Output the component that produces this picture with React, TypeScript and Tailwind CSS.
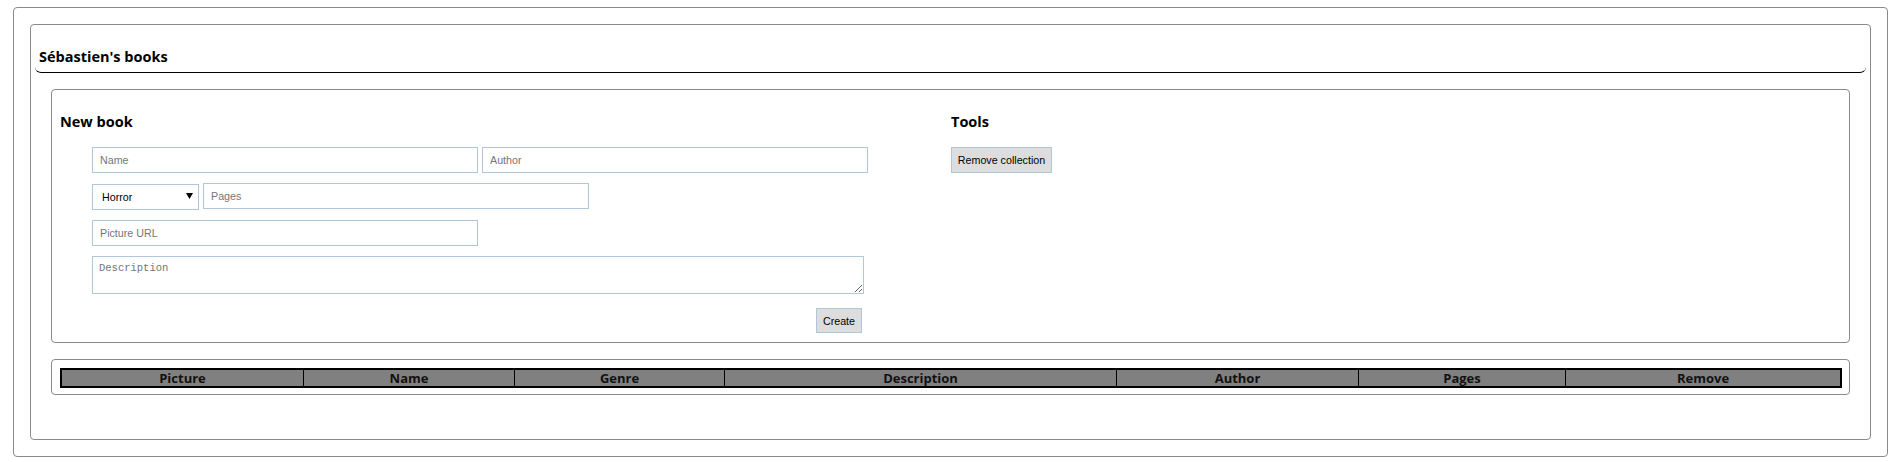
const columns = [
  { label: "Picture", w: "w-[241px]" },
  { label: "Name", w: "w-[211px]" },
  { label: "Genre", w: "w-[210px]" },
  { label: "Description", w: "w-[392px]" },
  { label: "Author", w: "w-[242px]" },
  { label: "Pages", w: "w-[207px]" },
  { label: "Remove", w: "" },
];

const field =
  "h-[26px] border border-[#b0c7d8] bg-white px-[7px] text-[10.7px] text-black placeholder:text-[#757575] font-['Liberation_Sans',Arial,sans-serif] outline-none";

const button =
  "border border-[#b0c7d8] bg-[#dddddd] text-[10.7px] text-black font-['Liberation_Sans',Arial,sans-serif] cursor-pointer";

function NewBook() {
  return (
    <div className="w-[899px] shrink-0 pl-2 pt-[21px] pb-[9px]">
      <h3 className="text-[14.5px] leading-[22px] font-bold text-black">New book</h3>
      <form className="mt-[14px] pl-[32px] flex flex-col gap-[10px]">
        <div className="flex gap-[4px]">
          <input className={`${field} w-[386px] shrink-0`} placeholder="Name" />
          <input className={`${field} w-[386px] shrink-0`} placeholder="Author" />
        </div>
        <div className="flex gap-[4px]">
          <div className="relative w-[107px] shrink-0">
            <select className={`${field} w-full appearance-none pl-[9px]`} defaultValue="Horror">
              <option>Horror</option>
              <option>Fantasy</option>
              <option>Science fiction</option>
            </select>
            <svg className="pointer-events-none absolute right-[6px] top-[10px]" width="7" height="6" viewBox="0 0 7 6">
              <path d="M0 0h7L3.5 6z" fill="#000" />
            </svg>
          </div>
          <input className={`${field} w-[386px] shrink-0`} placeholder="Pages" />
        </div>
        <input className={`${field} w-[386px]`} placeholder="Picture URL" />
        <textarea
          className="h-[38px] w-[772px] border border-[#b0c7d8] bg-white px-[6px] py-[4px] text-[10.5px] leading-[14px] placeholder:text-[#757575] font-['Liberation_Mono',monospace] outline-none"
          placeholder="Description"
        />
        <div className="w-[770px] flex justify-end mt-[4px]">
          <button type="button" className={`${button} h-[25px] w-[46px]`}>
            Create
          </button>
        </div>
      </form>
    </div>
  );
}

function Tools() {
  return (
    <div className="flex-1 pt-[21px]">
      <h3 className="text-[14.5px] leading-[22px] font-bold text-black">Tools</h3>
      <button type="button" className={`${button} mt-[14px] h-[26px] w-[101px]`}>
        Remove collection
      </button>
    </div>
  );
}

export default function App() {
  return (
    <div className="bg-white pt-[7px] px-[13px] pb-[6px] font-['Open_Sans',sans-serif]">
      <div className="border border-[#8a8a8a] rounded-[4px] p-4">
        <div className="border border-[#8a8a8a] rounded-[4px] px-[4px] pt-[22px] pb-[44px]">
          <h2 className="border-b border-black rounded-b-[6px] pl-[4px] pb-[5px] text-[14.5px] leading-[20px] font-bold text-black">
            Sébastien's books
          </h2>
          <div className="px-4 mt-4 flex flex-col gap-4">
            <div className="border border-[#8a8a8a] rounded-[4px] flex">
              <NewBook />
              <Tools />
            </div>
            <div className="border border-[#8a8a8a] rounded-[4px] pl-2 pr-[7px] pt-2 pb-[6px]">
              <table className="w-full table-fixed border-separate border-spacing-0 border-2 border-black bg-[#808080]">
                <thead>
                  <tr>
                    {columns.map((c, i) => (
                      <th
                        key={c.label}
                        className={`${c.w} h-[16px] p-0 text-[13px] leading-[16px] font-bold text-[#111] ${
                          i > 0 ? "border-l border-black" : ""
                        }`}
                      >
                        {c.label}
                      </th>
                    ))}
                  </tr>
                </thead>
              </table>
            </div>
          </div>
        </div>
      </div>
    </div>
  );
}
